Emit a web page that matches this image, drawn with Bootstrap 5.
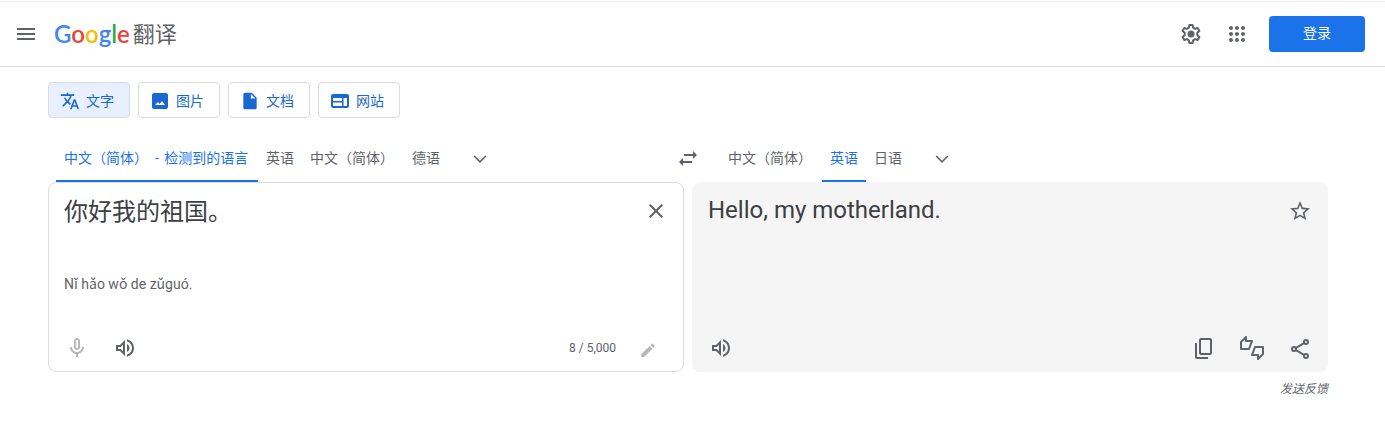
<!DOCTYPE html>
<html lang="zh-CN">
<head>
<meta charset="utf-8">
<meta name="viewport" content="width=device-width, initial-scale=1">
<title>Google 翻译</title>
<link rel="stylesheet" href="https://cdn.jsdelivr.net/npm/bootstrap@5.3.0/dist/css/bootstrap.min.css">
<style>
body{font-family:Roboto,"Noto Sans CJK SC",sans-serif;font-size:14px;line-height:20px;color:#5f6368;background:#fff}
svg{display:block;fill:currentColor;flex:none}
.topbar{border-top:1px solid #ebebeb;border-bottom:1px solid #dadce0;height:66px;padding:0 20px 0 2px;margin-top:1px}
.account{gap:6px}
.ico{width:48px;height:48px;padding:0;border:0;background:none;color:#5f6368;display:flex;align-items:center;justify-content:center;flex:none}
.ico-sm{width:40px}
.ico:disabled{color:#b5b7b9}
.line-art{fill:none;stroke:currentColor;stroke-width:2}
.brand{color:#5f6368;text-decoration:none;gap:3px;margin-left:4px}
.wordmark{font:600 24px/32px Lato,sans-serif}
.product{font-size:22px;line-height:32px;padding-top:2px}
.b{color:#4285f4}.r{color:#ea4335}.y{color:#fbbc04}.g{color:#34a853}
.signin{width:96px;height:36px;padding:0 0 2px;border-radius:4px;background:#1a73e8;color:#fff;font-size:14px;border:0;margin-left:6px}
.page{padding:15px 57px 0 48px}
.mode{height:36px;padding:1px 15px 0 11px;border:1px solid #dadce0;border-radius:4px;background:#fff;color:#1967d2;gap:6px;font-size:14px}
.mode.active{background:#e8f0fe}
.langs{grid-template-columns:minmax(0,1fr) 48px minmax(0,1fr);margin-top:16px}
.lang{height:48px;padding:2px 8px 0;border:0;border-bottom:2px solid transparent;background:none;color:#5f6368;font-size:14px;white-space:nowrap;text-align:left}
.lang-auto{min-width:202px}
.lang-wide{min-width:102px}
.lang.active{color:#1a73e8;border-color:#1a73e8}
.dash{padding-right:2px}
.panels{gap:8px}
.pane{flex:1 1 0;min-width:0;min-height:190px;border-radius:8px;border:1px solid #dadce0}
.pane.result{background:#f5f5f5;border-color:#f5f5f5}
.src{border:0;outline:0;resize:none;padding:0;height:48px;font-size:24px;line-height:34px;color:#3c4043;background:none;overflow:hidden}
.out{font-size:24px;line-height:30px;color:#3c4043}
.body-row{padding:12px 3px 0 15px}
.body-row .ico{margin-top:-8px}
.roman{padding:0 15px;margin-bottom:31px}
.tools{padding:0 3px 0 4px}
.tools .ico{height:46px}
.count{font-size:12px}
.feedback{font-size:12px;line-height:16px;font-style:italic;color:#5f6368;text-decoration:none;margin-top:9px}
</style>
<script src="https://cdn.jsdelivr.net/npm/bootstrap@5.3.0/dist/js/bootstrap.bundle.min.js"></script>
</head>
<body>
<header class="topbar d-flex align-items-center">
  <button class="ico" type="button" aria-label="主菜单"><svg width="24" height="24" viewBox="0 0 24 24"><path d="M3 18h18v-2H3v2zm0-5h18v-2H3v2zm0-7v2h18V6H3z"/></svg></button>
  <a href="#" class="brand d-flex align-items-center">
    <span class="wordmark"><span class="b">G</span><span class="r">o</span><span class="y">o</span><span class="b">g</span><span class="g">l</span><span class="r">e</span></span>
    <span class="product">翻译</span>
  </a>
  <div class="account d-flex align-items-center ms-auto">
    <button class="ico ico-sm" type="button" aria-label="设置"><svg width="24" height="24" viewBox="0 0 24 24"><path class="line-art" d="M10.400 3h3.200l.5 2.700 2 1.200 2.600-.9 1.700 2.900-2.100 1.800v2.600l2.100 1.800-1.700 2.900-2.600-.9-2 1.200-.5 2.700h-3.200l-.5-2.700-2-1.200-2.600.9-1.700-2.900 2.100-1.800v-2.600L3.600 8.900 5.300 6l2.600.9 2-1.200z" stroke-linejoin="round"/><circle cx="12" cy="12" r="3.500"/></svg></button>
    <button class="ico ico-sm" type="button" aria-label="Google 应用"><svg width="24" height="24" viewBox="0 0 24 24"><path d="M6 8c1.1 0 2-.9 2-2s-.9-2-2-2-2 .9-2 2 .9 2 2 2zm6 12c1.1 0 2-.9 2-2s-.9-2-2-2-2 .9-2 2 .9 2 2 2zm-6 0c1.1 0 2-.9 2-2s-.9-2-2-2-2 .9-2 2 .9 2 2 2zm0-6c1.1 0 2-.9 2-2s-.9-2-2-2-2 .9-2 2 .9 2 2 2zm6 0c1.1 0 2-.9 2-2s-.9-2-2-2-2 .9-2 2 .9 2 2 2zm4-8c0 1.1.9 2 2 2s2-.9 2-2-.9-2-2-2-2 .9-2 2zm-4 2c1.1 0 2-.9 2-2s-.9-2-2-2-2 .9-2 2 .9 2 2 2zm6 6c1.1 0 2-.9 2-2s-.9-2-2-2-2 .9-2 2 .9 2 2 2zm0 6c1.1 0 2-.9 2-2s-.9-2-2-2-2 .9-2 2 .9 2 2 2z"/></svg></button>
    <button class="signin btn" type="button">登录</button>
  </div>
</header>
<main class="page">
  <div class="d-flex gap-2 flex-wrap">
    <button class="mode active d-flex align-items-center" type="button"><svg width="20" height="20" viewBox="0 0 24 24"><path d="M12.87 15.07l-2.54-2.51.03-.03c1.74-1.94 2.98-4.17 3.71-6.53H17V4h-7V2H8v2H1v1.99h11.17C11.5 7.92 10.44 9.75 9 11.35 8.07 10.32 7.3 9.19 6.69 8h-2c.73 1.63 1.73 3.17 2.98 4.56l-5.09 5.02L4 19l5-5 3.11 3.11.76-2.04zM18.5 10h-2L12 22h2l1.12-3h4.75L21 22h2l-4.5-12zm-2.62 7l1.62-4.33L19.12 17h-3.24z"/></svg>文字</button>
    <button class="mode d-flex align-items-center" type="button"><svg width="20" height="20" viewBox="0 0 20 20"><path fill-rule="evenodd" d="M4 2h12a2 2 0 0 1 2 2v12a2 2 0 0 1-2 2H4a2 2 0 0 1-2-2V4a2 2 0 0 1 2-2zm1 12h10l-3-4-2.500 3L8 11z"/></svg>图片</button>
    <button class="mode d-flex align-items-center" type="button"><svg width="20" height="20" viewBox="0 0 24 24"><path d="M6 2c-1.100 0-2 .9-2 2v16c0 1.100.9 2 2 2h12c1.100 0 2-.9 2-2V8l-6-6H6zm7 7V3.500L18.500 9H13z"/></svg>文档</button>
    <button class="mode d-flex align-items-center" type="button"><svg width="20" height="20" viewBox="0 0 20 20"><path fill-rule="evenodd" d="M3 3h14a2 2 0 0 1 2 2v10a2 2 0 0 1-2 2H3a2 2 0 0 1-2-2V5a2 2 0 0 1 2-2zm0 4v3h9V7zm0 4.500V15h9v-3.500zM13.500 7v8H17V7z"/></svg>网站</button>
  </div>
  <div class="langs d-grid">
    <div class="d-flex ps-2">
      <button class="lang lang-auto active" type="button">中文（简体） &nbsp;<span class="dash">-</span> 检测到的语言</button>
      <button class="lang" type="button">英语</button>
      <button class="lang lang-wide" type="button">中文（简体）</button>
      <button class="lang" type="button">德语</button>
      <button class="ico ms-2" type="button" aria-label="更多源语言"><svg width="24" height="24" viewBox="0 0 24 24"><path d="M5.410 7.590L4 9l8 8 8-8-1.410-1.410L12 14.170z" transform="translate(2.400 3.400) scale(.8)"/></svg></button>
    </div>
    <button class="ico" type="button" aria-label="交换语言"><svg width="24" height="24" viewBox="0 0 24 24"><path d="M17 5v3H8v2h9v3l4-4zM7 12l-4 4 4 4v-3h9v-2H7z"/></svg></button>
    <div class="d-flex ps-2">
      <button class="lang lang-wide" type="button">中文（简体）</button>
      <button class="lang active" type="button">英语</button>
      <button class="lang" type="button">日语</button>
      <button class="ico ms-2" type="button" aria-label="更多目标语言"><svg width="24" height="24" viewBox="0 0 24 24"><path d="M5.410 7.590L4 9l8 8 8-8-1.410-1.410L12 14.170z" transform="translate(2.400 3.400) scale(.8)"/></svg></button>
    </div>
  </div>
  <div class="panels d-flex">
    <section class="pane d-flex flex-column">
      <div class="body-row d-flex">
        <textarea class="src flex-grow-1" aria-label="原文" spellcheck="false">你好我的祖国。</textarea>
        <button class="ico" type="button" aria-label="清除原文"><svg width="24" height="24" viewBox="0 0 24 24"><path d="M19 6.410L17.590 5 12 10.590 6.410 5 5 6.410 10.590 12 5 17.590 6.410 19 12 13.410 17.590 19 19 17.590 13.410 12z"/></svg></button>
      </div>
      <div class="roman mt-auto">Nǐ hǎo wǒ de zǔguó.</div>
      <div class="tools d-flex align-items-center">
        <button class="ico" type="button" disabled aria-label="语音输入"><svg width="24" height="24" viewBox="0 0 24 24"><path d="M12 14c1.660 0 3-1.340 3-3V5c0-1.660-1.340-3-3-3S9 3.340 9 5v6c0 1.660 1.340 3 3 3zm-1-9c0-.55.45-1 1-1s1 .45 1 1v6c0 .55-.45 1-1 1s-1-.45-1-1V5zm6 6c0 2.760-2.240 5-5 5s-5-2.240-5-5H5c0 3.530 2.610 6.430 6 6.920V21h2v-3.080c3.390-.49 6-3.390 6-6.920h-2z"/></svg></button>
        <button class="ico" type="button" aria-label="朗读原文"><svg width="24" height="24" viewBox="0 0 24 24"><path d="M3 9v6h4l5 5V4L7 9H3zm7-.17v6.340L7.830 13H5v-2h2.830L10 8.830zM16.500 12c0-1.770-1.020-3.290-2.500-4.030v8.050c1.480-.73 2.500-2.250 2.500-4.020zM14 3.230v2.060c2.890.86 5 3.540 5 6.710s-2.110 5.850-5 6.710v2.060c4.010-.91 7-4.490 7-8.770s-2.990-7.860-7-8.770z"/></svg></button>
        <span class="count ms-auto me-2">8 / 5,000</span>
        <button class="ico me-2" type="button" disabled aria-label="手写输入"><svg width="18" height="24" viewBox="0 -7 24 32"><path d="M3 17.250V21h3.750L17.810 9.940l-3.750-3.750L3 17.250zM20.710 7.040a1 1 0 0 0 0-1.410l-2.340-2.340a1 1 0 0 0-1.410 0l-1.830 1.830 3.750 3.750 1.830-1.830z"/></svg></button>
      </div>
    </section>
    <section class="pane result d-flex flex-column">
      <div class="body-row d-flex">
        <div class="out flex-grow-1" lang="en">Hello, my motherland.</div>
        <button class="ico" type="button" aria-label="保存译文"><svg width="24" height="24" viewBox="0 0 24 24"><path d="M22 9.240l-7.190-.62L12 2 9.190 8.630 2 9.240l5.460 4.730L5.820 21 12 17.270 18.180 21l-1.630-7.030L22 9.240zM12 15.400l-3.760 2.270 1-4.280-3.320-2.880 4.380-.38L12 6.100l1.710 4.040 4.380.38-3.320 2.880 1 4.280L12 15.400z"/></svg></button>
      </div>
      <div class="tools d-flex align-items-center mt-auto">
        <button class="ico" type="button" aria-label="朗读译文"><svg width="24" height="24" viewBox="0 0 24 24"><path d="M3 9v6h4l5 5V4L7 9H3zm7-.17v6.340L7.830 13H5v-2h2.830L10 8.830zM16.500 12c0-1.770-1.020-3.290-2.500-4.030v8.050c1.480-.73 2.500-2.250 2.500-4.020zM14 3.230v2.060c2.890.86 5 3.540 5 6.710s-2.110 5.850-5 6.710v2.060c4.010-.91 7-4.490 7-8.770s-2.990-7.860-7-8.770z"/></svg></button>
        <button class="ico ms-auto" type="button" aria-label="复制译文"><svg class="line-art" width="24" height="24" viewBox="0 0 24 24"><rect x="8" y="3" width="11" height="15" rx="1"/><path d="M4 7v14a1 1 0 0 0 1 1h11"/></svg></button>
        <button class="ico" type="button" aria-label="评价译文"><svg class="line-art" width="28" height="26" viewBox="0 0 28 26" stroke-linejoin="round"><path d="M3 14V7l5-5v4h6l-3 8zM25 12v7l-5 5v-4h-6l3-8z"/></svg></button>
        <button class="ico" type="button" aria-label="分享译文"><svg class="line-art" width="24" height="24" viewBox="0 0 24 24"><circle cx="18" cy="6" r="2"/><circle cx="6" cy="13" r="2"/><circle cx="18" cy="20" r="2"/><path d="M8 11.900l8-4.700M8 14.100l8 4.700"/></svg></button>
      </div>
    </section>
  </div>
  <div class="d-flex justify-content-end"><a class="feedback" href="#">发送反馈</a></div>
</main>
</body>
</html>
